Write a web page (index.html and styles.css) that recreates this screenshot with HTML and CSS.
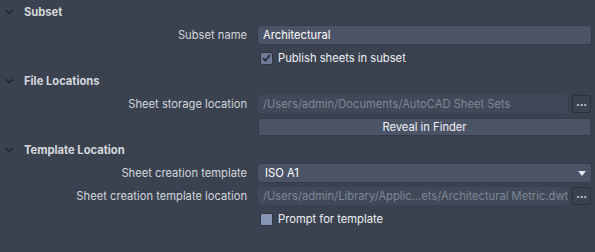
FILE: index.html
```html
<!DOCTYPE html>
<html>
<head>
<link rel="stylesheet" href="styles.css">
</head>
<body>

<div class="panel">

  <div class="section">
    <div class="section-head">
      <svg class="chev" width="9" height="6" viewBox="0 0 9 6"><path d="M1 1.2 L4.5 4.6 L8 1.2" /></svg>
      <span>Subset</span>
    </div>
    <div class="form">
      <div class="label">Subset name</div>
      <div class="field"><div class="input">Architectural</div></div>

      <div class="label"></div>
      <div class="field">
        <div class="check-row">
          <span class="box checked">
            <svg width="9" height="8" viewBox="0 0 9 8"><path d="M1 4.2 L3.4 6.6 L8 1.2" /></svg>
          </span>
          <span>Publish sheets in subset</span>
        </div>
      </div>
    </div>
  </div>

  <div class="section">
    <div class="section-head">
      <svg class="chev" width="9" height="6" viewBox="0 0 9 6"><path d="M1 1.2 L4.5 4.6 L8 1.2" /></svg>
      <span>File Locations</span>
    </div>
    <div class="form">
      <div class="label">Sheet storage location</div>
      <div class="field with-btn">
        <div class="input disabled">/Users/admin/Documents/AutoCAD Sheet Sets</div>
        <button class="dots">...</button>
      </div>

      <div class="label"></div>
      <div class="field"><button class="wide">Reveal in Finder</button></div>
    </div>
  </div>

  <div class="section">
    <div class="section-head">
      <svg class="chev" width="9" height="6" viewBox="0 0 9 6"><path d="M1 1.2 L4.5 4.6 L8 1.2" /></svg>
      <span>Template Location</span>
    </div>
    <div class="form">
      <div class="label">Sheet creation template</div>
      <div class="field">
        <div class="select">
          <span>ISO A1</span>
          <svg width="8" height="5" viewBox="0 0 8 5"><path d="M0 0 L8 0 L4 5 Z" /></svg>
        </div>
      </div>

      <div class="label">Sheet creation template location</div>
      <div class="field with-btn">
        <div class="input disabled">/Users/admin/Library/Applic...ets/Architectural Metric.dwt</div>
        <button class="dots">...</button>
      </div>

      <div class="label"></div>
      <div class="field">
        <div class="check-row">
          <span class="box"></span>
          <span>Prompt for template</span>
        </div>
      </div>
    </div>
  </div>

</div>

</body>
</html>
```

FILE: styles.css
```css
body {
    margin: 0;
    background-color: #3a4250;
    font-family: "Inter", "Noto Sans", sans-serif;
    font-size: 11.2px;
    color: #d3d7dd;
}

.panel {
    padding: 3px 4px 0 5px;
}

/* Collapsible section title */
.section-head {
    display: flex;
    align-items: center;
    height: 17px;
    font-weight: bold;
    color: #d6d9de;
}

.section-head .chev {
    margin-right: 10px;
    fill: none;
    stroke: #1f252e;
    stroke-width: 1.4;
}

.section {
    margin-bottom: 5px;
}

/* Two column form: labels on the left, controls on the right */
.form {
    display: grid;
    grid-template-columns: 242px minmax(0, 1fr);
    column-gap: 11px;
    row-gap: 5px;
    padding-top: 6px;
}

.label {
    text-align: right;
    display: flex;
    align-items: center;
    justify-content: flex-end;
    min-height: 18px;
}

.field {
    display: flex;
    align-items: center;
    min-height: 18px;
    min-width: 0;
}

.field.with-btn {
    gap: 4px;
}

.input {
    flex: 1;
    min-width: 0;
    height: 18px;
    line-height: 18px;
    padding: 0 5px;
    background-color: #4b5467;
    border-radius: 2px;
    color: #ffffff;
    box-shadow: 0 0 0 1px #353c48;
    white-space: nowrap;
    overflow: hidden;
}

.input.disabled {
    background-color: #414958;
    color: #7e8797;
    box-shadow: none;
}

button {
    font-family: inherit;
    font-size: inherit;
    cursor: pointer;
}

button.dots {
    flex: none;
    width: 19px;
    height: 18px;
    padding: 0 0 3px 0;
    background-color: #3a4250;
    border: 1px solid #2a3039;
    border-radius: 2px;
    color: #e6e8ec;
    font-weight: bold;
    line-height: 1;
}

button.wide {
    flex: 1;
    height: 18px;
    padding: 0;
    background-color: #4b5467;
    border: 1px solid #353c48;
    border-radius: 2px;
    color: #eef0f3;
}

.select {
    flex: 1;
    display: flex;
    align-items: center;
    justify-content: space-between;
    height: 18px;
    padding: 0 5px 0 7px;
    background-color: #4b5467;
    border-radius: 2px;
    color: #ffffff;
    box-shadow: 0 0 0 1px #353c48;
}

.select svg {
    fill: #e4e7ec;
}

.check-row {
    display: flex;
    align-items: center;
    gap: 5px;
    height: 18px;
    padding-left: 2px;
    color: #eef0f3;
}

.box {
    flex: none;
    width: 13px;
    height: 13px;
    border-radius: 2px;
    background-color: #8796b5;
    border: 1px solid #2f3641;
    display: flex;
    align-items: center;
    justify-content: center;
    box-sizing: border-box;
}

.box.checked {
    background-color: #6d7b98;
}

.box svg {
    fill: none;
    stroke: #262c35;
    stroke-width: 1.8;
}
```
